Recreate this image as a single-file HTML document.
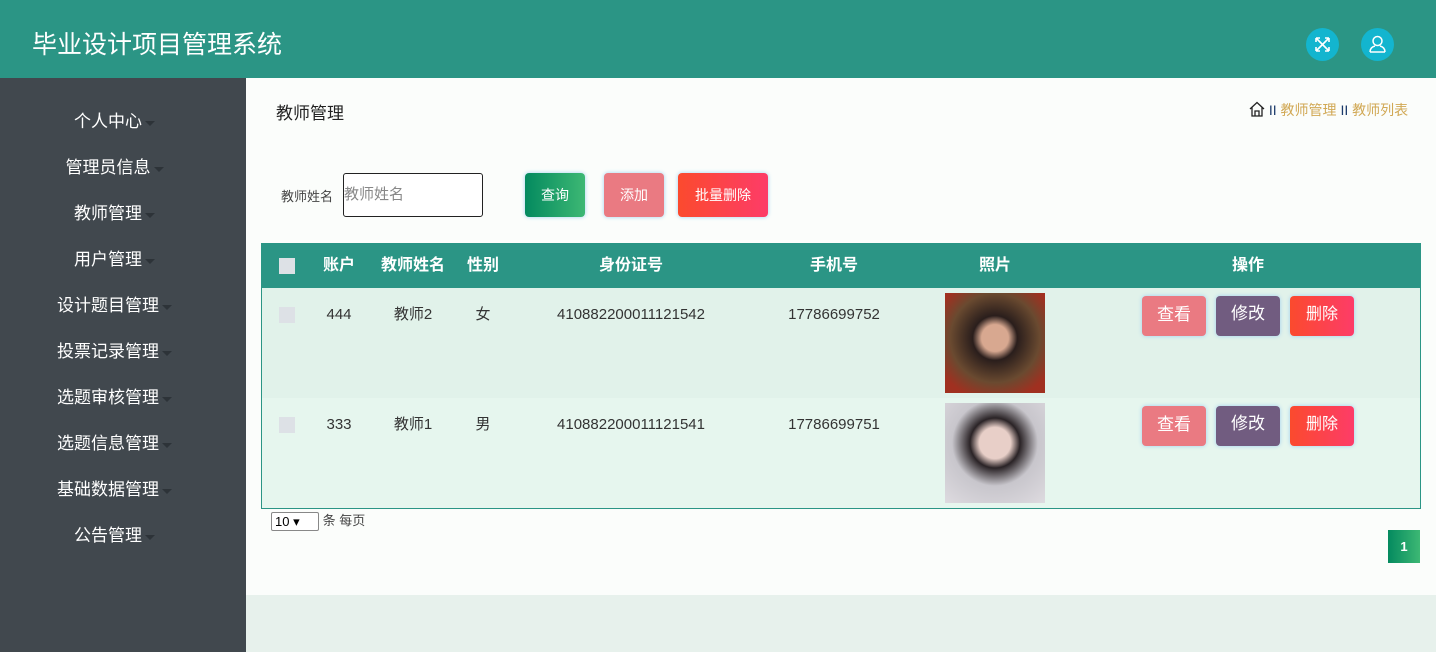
<!DOCTYPE html>
<html><head><meta charset="utf-8"><style>
*{margin:0;padding:0;box-sizing:border-box}
body{width:1436px;height:652px;overflow:hidden;font-family:"Liberation Sans","Noto Sans CJK SC",sans-serif;background:#e7f1ec;position:relative}
.hd{position:absolute;left:0;top:0;width:1436px;height:78px;background:#2b9585}
.hd h1{position:absolute;left:32px;top:29px;font-size:25px;color:#fff;font-weight:normal;line-height:32px}
.ic{position:absolute;top:28px;width:33px;height:33px;border-radius:50%;background:#13b5cf}
.sb{position:absolute;left:0;top:78px;width:246px;height:574px;background:#41484e}
.sb div{position:absolute;left:0;width:216px;text-align:center;color:#fff;font-size:17px;line-height:22px}
.sb div span{position:relative}
.sb div span:after{content:"";position:absolute;right:-13px;top:9px;border:5px solid transparent;border-top:5px solid #2d3338}
.ct{position:absolute;left:246px;top:78px;width:1190px;height:517px;background:#fbfdfb}
.abs{position:absolute}
.btn{position:absolute;color:#fff;font-size:14px;text-align:center;border-radius:4px;box-shadow:0 0 4px #9fd0f0}
.th{position:absolute;top:243px;height:45px;color:#fff;font-size:16px;font-weight:bold;line-height:45px;text-align:center}
.td{position:absolute;font-size:15px;color:#333;text-align:center;line-height:20px}
</style></head><body>
<div class="hd"><h1>毕业设计项目管理系统</h1>
<div class="ic" style="left:1306px"><svg width="33" height="33" viewBox="0 0 33 33" fill="none" stroke="#fff" stroke-width="1.6"><path d="M10 10l13 13M23 10L10 23M10 10h4M10 10v4M23 10h-4M23 10v4M10 23h4M10 23v-4M23 23h-4M23 23v-4"/></svg></div>
<div class="ic" style="left:1361px"><svg width="33" height="33" viewBox="0 0 33 33" fill="none" stroke="#fff" stroke-width="1.5"><circle cx="16.5" cy="13" r="4.5"/><path d="M9 24c0-4 3-5.5 5-6M24 24c0-4-3-5.5-5-6M9 24h15"/></svg></div>
</div>
<div class="sb">
<div style="top:33px"><span>个人中心</span></div><div style="top:79px"><span>管理员信息</span></div><div style="top:125px"><span>教师管理</span></div><div style="top:171px"><span>用户管理</span></div><div style="top:217px"><span>设计题目管理</span></div><div style="top:263px"><span>投票记录管理</span></div><div style="top:309px"><span>选题审核管理</span></div><div style="top:355px"><span>选题信息管理</span></div><div style="top:401px"><span>基础数据管理</span></div><div style="top:447px"><span>公告管理</span></div>
</div>
<div class="ct"></div>
<div class="abs" style="left:276px;top:99px;font-size:17px;color:#222">教师管理</div>
<div class="abs" style="left:1249px;top:101px;font-size:14px;color:#d1a854;line-height:18px"><svg width="16" height="16" viewBox="0 0 16 16" fill="none" stroke="#222" stroke-width="1.3" style="vertical-align:-2px"><path d="M1 8L8 1.5 15 8M3 6.5V15h10V6.5M6 15v-5h4v5"/></svg> <span style="color:#1b3a6b">II</span> 教师管理 <span style="color:#1b3a6b">II</span> 教师列表</div>
<div class="abs" style="left:281px;top:186px;font-size:13px;color:#444">教师姓名</div>
<div class="abs" style="left:343px;top:173px;width:140px;height:44px;border:1px solid #222;border-radius:3px;background:#fff;font-size:15px;color:#888;line-height:42px">教师姓名</div>
<div class="btn" style="left:525px;top:173px;width:60px;height:44px;line-height:44px;background:linear-gradient(90deg,#048a5f,#3db874)">查询</div>
<div class="btn" style="left:604px;top:173px;width:60px;height:44px;line-height:44px;background:#ea7a82">添加</div>
<div class="btn" style="left:678px;top:173px;width:90px;height:44px;line-height:44px;background:linear-gradient(90deg,#fb4a2e,#fd3c68)">批量删除</div>
<div class="abs" style="left:261px;top:243px;width:1160px;height:266px;border:1px solid #2b9585;background:#e6f6ee"></div>
<div class="abs" style="left:261px;top:243px;width:1160px;height:45px;background:#2b9585"></div>
<div class="abs" style="left:262px;top:288px;width:1158px;height:110px;background:#e1f2ea"></div>
<div class="abs" style="left:279px;top:258px;width:16px;height:16px;background:#dde1e6"></div>
<div class="th" style="left:309px;width:60px">账户</div><div class="th" style="left:373px;width:80px">教师姓名</div><div class="th" style="left:453px;width:60px">性别</div><div class="th" style="left:531px;width:200px">身份证号</div><div class="th" style="left:734px;width:200px">手机号</div><div class="th" style="left:945px;width:100px">照片</div><div class="th" style="left:1148px;width:200px">操作</div>
<div class="abs" style="left:279px;top:307px;width:16px;height:16px;background:#dde1e6"></div>
<div class="abs" style="left:279px;top:417px;width:16px;height:16px;background:#dde1e6"></div>
<div class="td" style="left:309px;top:305px;width:60px">444</div><div class="td" style="left:373px;top:305px;width:80px">教师2</div><div class="td" style="left:453px;top:305px;width:60px">女</div><div class="td" style="left:531px;top:305px;width:200px">410882200011121542</div><div class="td" style="left:734px;top:305px;width:200px">17786699752</div>
<div class="td" style="left:309px;top:415px;width:60px">333</div><div class="td" style="left:373px;top:415px;width:80px">教师1</div><div class="td" style="left:453px;top:415px;width:60px">男</div><div class="td" style="left:531px;top:415px;width:200px">410882200011121541</div><div class="td" style="left:734px;top:415px;width:200px">17786699751</div>
<div class="abs" style="left:945px;top:293px;width:100px;height:100px;background:radial-gradient(circle at 50% 45%,#d8a890 0 18%,#2a1e1c 30%,#6a4a30 60%,#a03020 85%)"></div>
<div class="abs" style="left:945px;top:403px;width:100px;height:100px;background:radial-gradient(circle at 50% 40%,#e8cfc8 0 20%,#2a2326 32%,#c8c6cc 55%,#dedbe0)"></div>
<div class="btn" style="left:1142px;top:296px;width:64px;height:40px;line-height:38px;font-size:17px;background:#ea7a82">查看</div>
<div class="btn" style="left:1216px;top:296px;width:64px;height:40px;line-height:36px;font-size:17px;background:#715c80">修改</div>
<div class="btn" style="left:1290px;top:296px;width:64px;height:40px;line-height:38px;font-size:16px;background:linear-gradient(90deg,#fb4a2e,#fd3c68)">删除</div>
<div class="btn" style="left:1142px;top:406px;width:64px;height:40px;line-height:38px;font-size:17px;background:#ea7a82">查看</div>
<div class="btn" style="left:1216px;top:406px;width:64px;height:40px;line-height:36px;font-size:17px;background:#715c80">修改</div>
<div class="btn" style="left:1290px;top:406px;width:64px;height:40px;line-height:38px;font-size:16px;background:linear-gradient(90deg,#fb4a2e,#fd3c68)">删除</div>
<div class="abs" style="left:271px;top:510px;font-size:13px;color:#444"><span style="display:inline-block;width:48px;height:19px;border:1px solid #888;border-radius:2px;background:#fff;font-size:13px;line-height:17px;padding-left:3px;color:#000;vertical-align:middle">10 ▾</span> 条 每页</div>
<div class="abs" style="left:1388px;top:530px;width:32px;height:33px;background:linear-gradient(90deg,#048a5f,#3db874);color:#fff;font-size:13px;font-weight:bold;text-align:center;line-height:33px">1</div>
</body></html>
